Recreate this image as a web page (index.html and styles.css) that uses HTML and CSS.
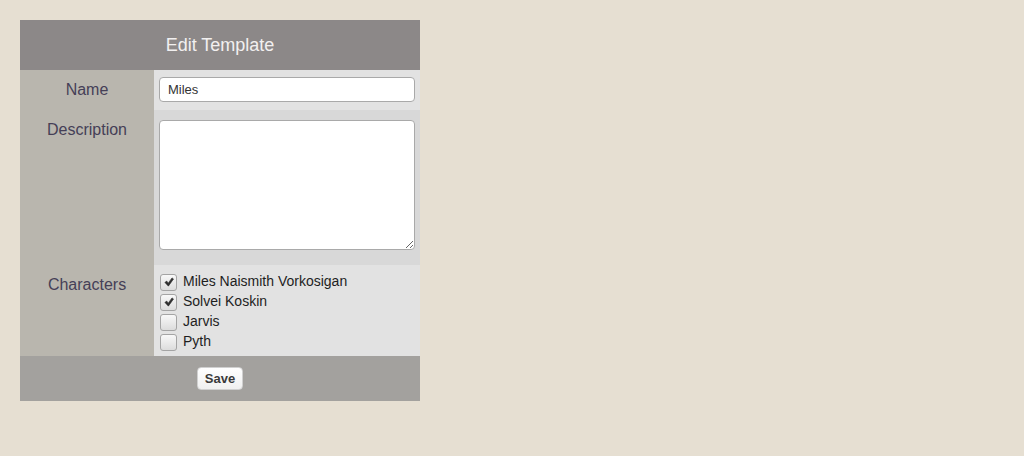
FILE: index.html
```html
<!DOCTYPE html>
<html>
<head>
<meta charset="utf-8">
<link rel="stylesheet" href="styles.css">
</head>
<body>
<div class="panel">
  <div class="header">Edit Template</div>
  <div class="grid">
    <div class="label row-name">Name</div>
    <div class="value v-name"><input class="text" type="text" value="Miles"></div>
    <div class="label row-desc">Description</div>
    <div class="value v-desc"><textarea class="area"></textarea></div>
    <div class="label row-chars">Characters</div>
    <div class="value v-chars">
      <div class="item"><span class="box"><svg viewBox="0 0 16 16" width="16" height="16"><path d="M2.5 8.5 L5 6.8 L7 9.5 L12 2.5 L14 4 L7.2 13.5 Z" fill="#2e2e2e" stroke="#2e2e2e" stroke-width="0.8" stroke-linejoin="round"/></svg></span><span class="name">Miles Naismith Vorkosigan</span></div>
      <div class="item"><span class="box"><svg viewBox="0 0 16 16" width="16" height="16"><path d="M2.5 8.5 L5 6.8 L7 9.5 L12 2.5 L14 4 L7.2 13.5 Z" fill="#2e2e2e" stroke="#2e2e2e" stroke-width="0.8" stroke-linejoin="round"/></svg></span><span class="name">Solvei Koskin</span></div>
      <div class="item"><span class="box"></span><span class="name">Jarvis</span></div>
      <div class="item"><span class="box"></span><span class="name">Pyth</span></div>
    </div>
  </div>
  <div class="footer"><button class="save">Save</button></div>
</div>
</body>
</html>
```

FILE: styles.css
```css
html, body {
  margin: 0;
  padding: 0;
}
body {
  background: #e6dfd2;
  font-family: "Liberation Sans", Arial, sans-serif;
  padding: 20px;
}
.panel {
  width: 400px;
}
.header {
  height: 50px;
  background: #8c8888;
  color: #f2f0f0;
  font-size: 18px;
  display: flex;
  align-items: center;
  justify-content: center;
}
.grid {
  display: grid;
  grid-template-columns: 134px 266px;
}
.label {
  background: #b9b6ae;
  color: #453f57;
  font-size: 16px;
  line-height: 20px;
  text-align: center;
  padding-top: 10px;
}
.value {
  box-sizing: border-box;
  padding-left: 5px;
  padding-right: 5px;
}
.v-name {
  background: #e2e2e2;
  height: 40px;
  padding-top: 7px;
}
.v-desc {
  background: #d8d8d8;
  height: 155px;
  padding-top: 10px;
}
.v-chars {
  background: #e2e2e2;
  height: 91px;
  padding-top: 7px;
  padding-left: 6px;
}
.text {
  display: block;
  box-sizing: border-box;
  width: 256px;
  height: 25px;
  margin: 0;
  border: 1px solid #a9a9a9;
  border-radius: 4px;
  background: #fff;
  padding: 0 8px;
  font-family: "Liberation Sans", Arial, sans-serif;
  font-size: 13px;
  color: #333;
  outline: none;
}
.area {
  display: block;
  box-sizing: border-box;
  width: 256px;
  height: 130px;
  margin: 0;
  border: 1px solid #a9a9a9;
  border-radius: 4px;
  background: #fff;
  font-family: "Liberation Sans", Arial, sans-serif;
  font-size: 13px;
}
.item {
  display: flex;
  align-items: center;
  height: 20px;
  gap: 6px;
}
.box {
  box-sizing: border-box;
  width: 17px;
  height: 17px;
  border: 1px solid #a4a4a4;
  border-radius: 3px;
  background: linear-gradient(#f8f8f8, #dcdcdc);
  display: flex;
  align-items: center;
  justify-content: center;
}
.box svg {
  width: 12px;
  height: 12px;
}
.name {
  font-size: 14px;
  color: #1e1e1e;
  position: relative;
  top: -1px;
}
.footer {
  height: 45px;
  background: #a3a19e;
  display: flex;
  align-items: center;
  justify-content: center;
}
.save {
  box-sizing: border-box;
  width: 46px;
  height: 23px;
  margin: 0;
  padding: 0;
  border: 1px solid #d0d0d0;
  border-radius: 4px;
  background: linear-gradient(#ffffff, #f0f0f0);
  font-family: "Liberation Sans", Arial, sans-serif;
  font-weight: bold;
  font-size: 13px;
  color: #3a3a3a;
}
```
